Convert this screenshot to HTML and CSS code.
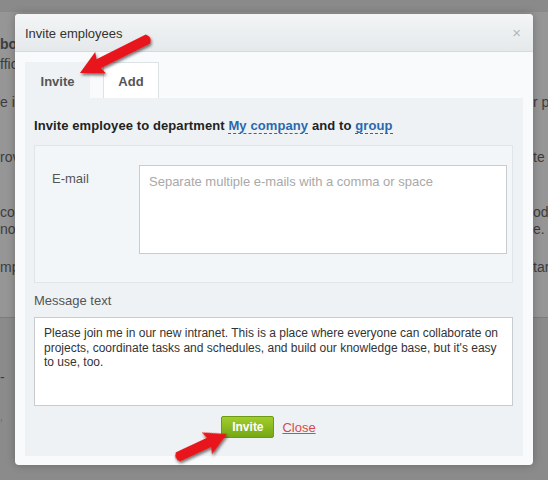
FILE: index.html
```html
<!DOCTYPE html>
<html lang="en">

<head>
    <meta charset="UTF-8">
    <meta name="viewport" content="width=device-width, initial-scale=1.0">
    <title>Invite employees</title>
    <link rel="stylesheet" href="styles.css">
</head>

<body>
    <!-- page behind the overlay -->
    <div class="page">
        <div class="page-top"></div>
        <div class="page-text">
            <div class="line line-1"><span class="bold">boo</span><span></span></div>
            <div class="line line-2"><span>ffic</span><span></span></div>
            <div class="line line-3"><span>e is</span><span>r p</span></div>
            <div class="line line-4"><span>rov</span><span>te</span></div>
            <div class="line line-5"><span>con</span><span>od</span></div>
            <div class="line line-6"><span>noo</span><span>e.</span></div>
            <div class="line line-7"><span>mpl</span><span>tar</span></div>
        </div>
        <div class="page-bottom">
            <div class="line line-8"><span>-</span><span></span></div>
            <div class="line line-9"><span>'</span><span></span></div>
        </div>
    </div>

    <div class="dialog">
        <div class="dialog-header">
            <span class="dialog-title">Invite employees</span>
            <span class="dialog-close">&times;</span>
        </div>
        <div class="dialog-body">
            <div class="tabs">
                <div class="tab tab-active">Invite</div>
                <div class="tab">Add</div>
            </div>
            <div class="panel">
                <div class="panel-heading">
                    Invite employee to department <a class="dash-link">My company</a> and to <a class="dash-link">group</a>
                </div>
                <div class="email-box">
                    <label class="email-label" for="emails">E-mail</label>
                    <textarea id="emails" class="email-input" placeholder="Separate multiple e-mails with a comma or space"></textarea>
                </div>
                <div class="message-label">Message text</div>
                <textarea class="message-input">Please join me in our new intranet. This is a place where everyone can collaborate on projects, coordinate tasks and schedules, and build our knowledge base, but it's easy to use, too.</textarea>
                <div class="actions">
                    <button class="btn-invite">Invite</button>
                    <a class="link-close">Close</a>
                </div>
            </div>
        </div>
    </div>

    <!-- red pointer arrows drawn on top of the screenshot -->
    <svg class="arrows" width="548" height="480" viewBox="0 0 548 480">
        <defs>
            <filter id="shade" x="-30%" y="-30%" width="160%" height="160%">
                <feDropShadow dx="1" dy="2" stdDeviation="1.6" flood-color="#000" flood-opacity="0.55" />
            </filter>
        </defs>
        <g filter="url(#shade)" fill="#e8141a">
            <g transform="translate(80 73) rotate(153.4)">
                <path d="M0 0 L-23 -12 L-21 -5 L-76 -5 Q-81 0 -76 5 L-21 5 L-23 12 Z" />
            </g>
            <g transform="translate(227 434) rotate(-25)">
                <path d="M0 0 L-22 -12 L-20 -5 L-54 -5 Q-59 0 -54 5 L-20 5 L-22 12 Z" />
            </g>
        </g>
    </svg>
</body>

</html>
```

FILE: styles.css
```css
:root {
    --overlay: #969696;
    --overlay-dark: #8b8b8b;
    --text: #333333;
    --muted: #555555;
    --panel: #eef2f4;
    --box: #f3f6f8;
    --border: #c9cccf;
    --link: #2a68ae;
    --close: #d44b4b;
}

body {
    margin: 0;
    width: 548px;
    height: 480px;
    overflow: hidden;
    position: relative;
    background-color: var(--overlay-dark);
    font-family: 'Liberation Sans', Arial, sans-serif;
}

/* background page */
.page {
    display: flex;
    flex-direction: column;
}

.page-top {
    height: 12px;
    background-color: #8a8a8a;
}

.page-text {
    background-color: var(--overlay);
    height: 306px;
    padding-top: 24px;
    box-sizing: border-box;
    border-bottom: 1px solid #7c7c7c;
}

.page-bottom {
    padding-top: 51px;
}

.line {
    display: flex;
    justify-content: space-between;
    height: 17px;
    line-height: 17px;
    font-size: 14px;
    color: #3d3d3d;
}

.line span:last-child {
    width: 15px;
    overflow: hidden;
    white-space: nowrap;
}

.bold {
    font-weight: bold;
}

.line-2 { margin-top: 3px; }
.line-3 { margin-top: 21px; }
.line-4 { margin-top: 38px; }
.line-5 { margin-top: 38px; }
.line-7 { margin-top: 21px; }
.line-9 { margin-top: 30px; color: #777; }

/* dialog */
.dialog {
    position: absolute;
    left: 15px;
    top: 14px;
    width: 518px;
    height: 451px;
    background-color: #f8fafb;
    border-radius: 4px;
    box-shadow: 0 0 8px rgba(0, 0, 0, 0.25);
    overflow: hidden;
}

.dialog-header {
    height: 37px;
    background: linear-gradient(#f3f5f6, #e5e9eb);
    border-bottom: 1px solid #d5dadd;
    display: flex;
    align-items: center;
    justify-content: space-between;
    padding: 0 10px;
}

.dialog-title {
    font-size: 13px;
    color: var(--text);
    margin-top: 1px;
}

.dialog-close {
    font-size: 15px;
    color: #b3b7ba;
    margin-right: 2px;
}

.dialog-body {
    padding: 10px 10px 9px;
}

.tabs {
    display: flex;
    gap: 13px;
    height: 36px;
}

.tab {
    display: flex;
    align-items: center;
    justify-content: center;
    font-size: 13px;
    font-weight: bold;
    color: var(--muted);
    padding-top: 2px;
    box-sizing: border-box;
}

.tab-active {
    width: 65px;
    background-color: var(--panel);
}

.tab:not(.tab-active) {
    width: 56px;
    background-color: #ffffff;
    border: 1px solid #dde2e5;
    border-bottom: none;
}

.panel {
    background-color: var(--panel);
    height: 358px;
    padding: 20px 10px 0 9px;
    box-sizing: border-box;
}

.panel-heading {
    font-size: 13px;
    font-weight: bold;
    color: #222;
    line-height: 16px;
    letter-spacing: 0.1px;
}

.dash-link {
    color: var(--link);
    border-bottom: 1px dashed var(--link);
}

.email-box {
    display: flex;
    margin-top: 11px;
    height: 138px;
    padding: 19px 5px 0 17px;
    box-sizing: border-box;
    background-color: var(--box);
    border: 1px solid #e0e5e8;
}

.email-label {
    width: 87px;
    font-size: 13px;
    color: var(--muted);
    line-height: 16px;
    padding-top: 6px;
}

textarea {
    font-family: 'Liberation Sans', Arial, sans-serif;
    background-color: #ffffff;
    border: 1px solid var(--border);
    border-radius: 0;
    box-sizing: border-box;
    resize: none;
    margin: 0;
    outline: none;
}

.email-input {
    width: 368px;
    height: 89px;
    font-size: 13px;
    padding: 8px 9px;
}

::placeholder {
    color: #a9a9a9;
    opacity: 1;
}

.message-label {
    font-size: 13px;
    color: var(--muted);
    line-height: 16px;
    margin-top: 10px;
}

.message-input {
    display: block;
    margin-top: 8px;
    width: 479px;
    height: 89px;
    font-size: 12px;
    line-height: 14.5px;
    color: var(--text);
    padding: 8px 9px;
}

.actions {
    display: flex;
    align-items: center;
    justify-content: center;
    gap: 8px;
    margin-top: 10px;
    padding-right: 10px;
}

.btn-invite {
    width: 53px;
    height: 22px;
    border: 1px solid #6c9a12;
    border-radius: 2px;
    background: linear-gradient(#a2cc2c, #74a814);
    color: #ffffff;
    font-family: 'Liberation Sans', Arial, sans-serif;
    font-size: 12px;
    font-weight: bold;
    padding: 0;
    cursor: pointer;
}

.link-close {
    font-size: 13px;
    color: var(--close);
    text-decoration: underline;
}

.arrows {
    position: absolute;
    left: 0;
    top: 0;
    pointer-events: none;
}
```
